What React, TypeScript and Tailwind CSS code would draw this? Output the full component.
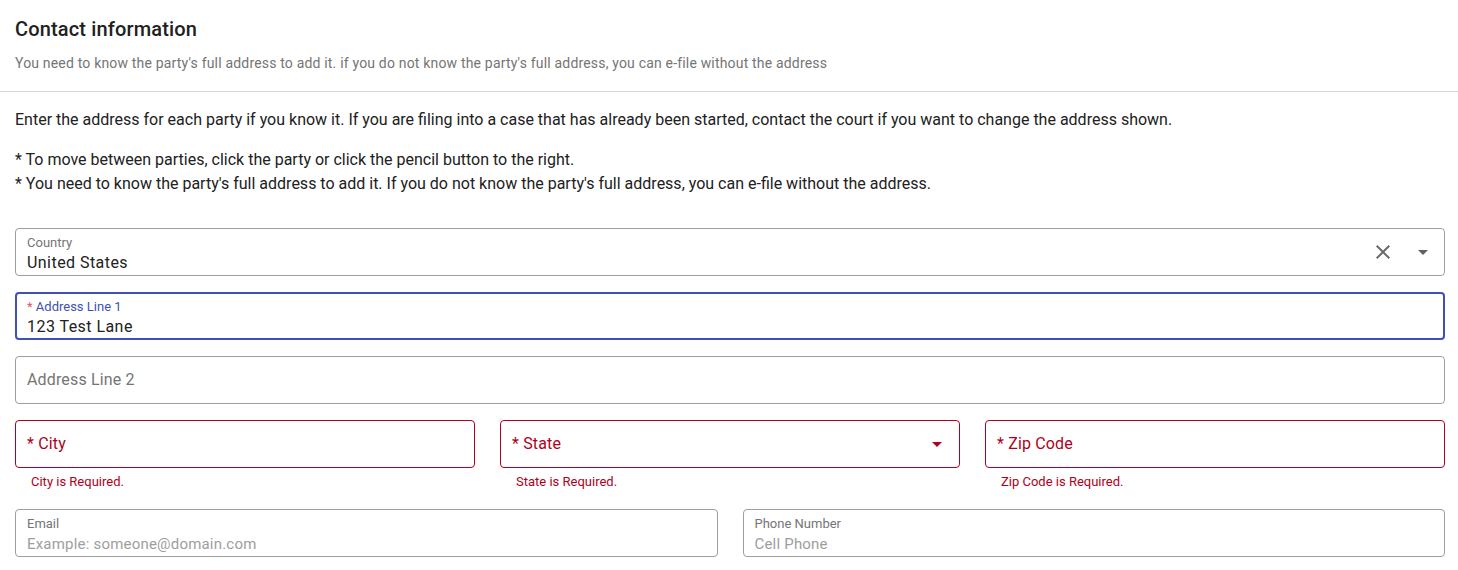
import React from "react";

const font = { fontFamily: "Roboto, 'Noto Sans', sans-serif" };

const CaretDown = ({ className }: { className?: string }) => (
  <svg viewBox="0 0 10 5" className={className} fill="currentColor">
    <path d="M0 0 L5 5 L10 0 Z" />
  </svg>
);

const CloseIcon = () => (
  <svg viewBox="0 0 24 24" className="h-6 w-6 text-[#6b6b6b]" fill="currentColor">
    <path d="M19 6.41 17.59 5 12 10.59 6.41 5 5 6.41 10.59 12 5 17.59 6.41 19 12 13.41 17.59 19 19 17.59 13.41 12z" />
  </svg>
);

type FieldProps = {
  label: string;
  placeholder: string;
};

const OutlinedField = ({ label, placeholder }: FieldProps) => (
  <div className="h-12 rounded border border-[#9e9e9e] px-[11px] pt-[6px] flex flex-col">
    <span className="text-[13px] leading-4 text-[#757575]">{label}</span>
    <span className="text-[15px] leading-6 tracking-[0.2px] text-[#9e9e9e]">{placeholder}</span>
  </div>
);

const ErrorField = ({ label, error, select }: { label: string; error: string; select?: boolean }) => (
  <div className="flex-1 flex flex-col">
    <div className="h-12 rounded border border-[#b00020] px-[11px] flex items-center justify-between">
      <span className="text-base tracking-[0.15px] text-[#b00020]">* {label}</span>
      {select && <CaretDown className="w-[10px] h-[5px] mr-[6px] text-[#b00020]" />}
    </div>
    <p className="text-[13px] leading-4 mt-[6px] pl-4 text-[#b00020]">{error}</p>
  </div>
);

export default function App() {
  return (
    <div style={font} className="bg-white w-[1458px] min-h-[570px] text-[#212121]">
      <div className="px-[15px] pt-[17px] pb-[18px] border-b border-[#d6d6d6]">
        <h2 className="text-xl font-medium leading-6 tracking-[0.15px] text-[#212121]">Contact information</h2>
        <p className="text-sm leading-5 tracking-[0.18px] text-[#757575] mt-[12px]">
          You need to know the party's full address to add it. if you do not know the party's full address, you can e-file without the address
        </p>
      </div>

      <div className="px-[15px] pt-[16px]">
        <p className="text-base leading-6">
          Enter the address for each party if you know it. If you are filing into a case that has already been started, contact the court if you want to change the address shown.
        </p>
        <div className="mt-4 text-base leading-6">
          <p>* To move between parties, click the party or click the pencil button to the right.</p>
          <p>* You need to know the party's full address to add it. If you do not know the party's full address, you can e-file without the address.</p>
        </div>

        <div className="mt-[32px] flex flex-col gap-4 w-[1430px]">
          <div className="h-12 rounded border border-[#9e9e9e] pl-[11px] pr-[16px] flex items-center">
            <div className="flex-1 flex flex-col self-stretch pt-[6px]">
              <span className="text-[13px] leading-4 text-[#757575]">Country</span>
              <span className="text-base leading-6 tracking-[0.45px] text-[#212121]">United States</span>
            </div>
            <CloseIcon />
            <CaretDown className="w-[10px] h-[5px] ml-[23px] text-[#616161]" />
          </div>

          <div className="h-12 rounded border-2 border-[#3f51b5] px-[10px] pt-[5px] flex flex-col">
            <span className="text-[13px] leading-4 text-[#3f51b5]">
              <span className="text-[#e0556e]">*</span> Address Line 1
            </span>
            <span className="text-base leading-6 tracking-[0.45px] text-[#212121]">123 Test Lane</span>
          </div>

          <div className="h-12 rounded border border-[#9e9e9e] px-[11px] flex items-center">
            <span className="text-base tracking-[0.15px] text-[#757575]">Address Line 2</span>
          </div>

          <div className="flex gap-[25px]">
            <ErrorField label="City" error="City is Required." />
            <ErrorField label="State" error="State is Required." select />
            <ErrorField label="Zip Code" error="Zip Code is Required." />
          </div>

          <div className="flex gap-[25px] mt-[3px]">
            <div className="flex-1">
              <OutlinedField label="Email" placeholder="Example: someone@domain.com" />
            </div>
            <div className="flex-1">
              <OutlinedField label="Phone Number" placeholder="Cell Phone" />
            </div>
          </div>
        </div>
      </div>
    </div>
  );
}
